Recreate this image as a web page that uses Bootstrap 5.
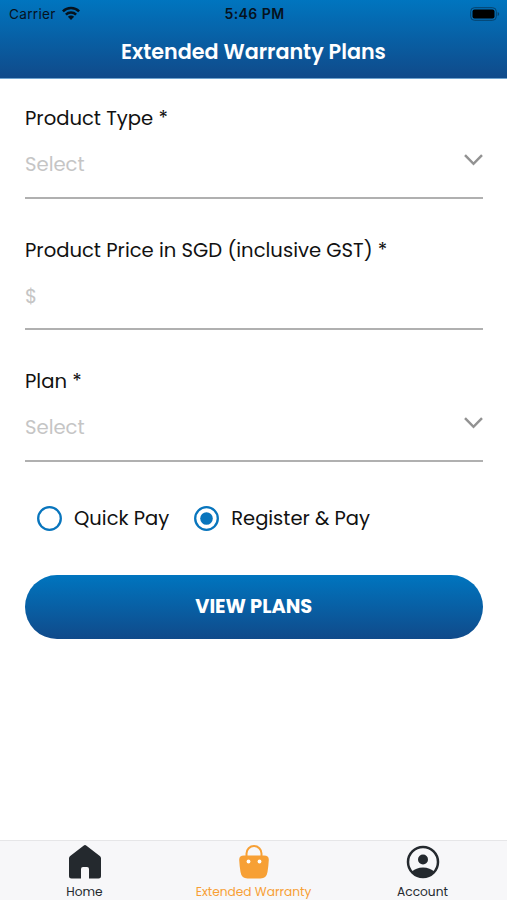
<!DOCTYPE html>
<html lang="en">
<head>
<meta charset="utf-8">
<meta name="viewport" content="width=device-width, initial-scale=1">
<title>Extended Warranty Plans</title>
<link href="https://cdn.jsdelivr.net/npm/bootstrap@5.3.0/dist/css/bootstrap.min.css" rel="stylesheet">
<style>
body{font-family:Poppins,Inter,"Liberation Sans",sans-serif;color:#111;background:#fff;height:900px;overflow:hidden}
svg{display:block}
.app-header{height:79px;background:linear-gradient(#0075bf,#104a8a);border-bottom:1px solid #6fa3cf}
.status{height:27px;padding:0 7px 0 9px;font:400 13.6px/27px Inter,sans-serif;letter-spacing:.3px;color:#06121d}
.status>div{flex:1 1 0}
.status .wifi{margin-left:6px}
.status .carrier{padding-top:1px}
.clock{font-size:14px;font-weight:600;letter-spacing:.45px}
.app-title{font-size:20.7px;line-height:30px;font-weight:600;margin:10px 0 0}
.fields{padding:24px 24.5px 0 25px}
.field{height:95.5px;border-bottom:2px solid #b0b0b0;margin-bottom:36px}
.field label{display:block;font-size:19.6px;line-height:30px}
.entry{height:30px;margin-top:17px;font-size:19.6px;color:#c5c5c5}
.entry svg{margin-top:-11px}
.choices{height:30px;margin-top:42px;padding-left:12px;font-size:19.5px;line-height:30px}
.choices svg{margin-right:12px}
.choices .alt{margin-left:25px}
.btn-plans,.btn-plans:hover{height:64px;margin-top:41.5px;border:0;background:linear-gradient(#0075bf,#104a8a);font-size:19.4px;font-weight:700;color:#fff}
.tabs{height:60px;background:#f7f7f9;border-top:1px solid #e6e6e8;font-size:12.2px}
.tabs a{color:#24292e;padding-top:3px;line-height:16px}
.tabs a.active{color:#f7a035}
.tabs svg{margin-bottom:4px}
</style>
<script src="https://cdn.jsdelivr.net/npm/bootstrap@5.3.0/dist/js/bootstrap.bundle.min.js"></script>
</head>
<body class="d-flex flex-column">
<header class="app-header flex-shrink-0">
  <div class="status d-flex align-items-center">
    <div class="d-flex align-items-center"><span class="carrier">Carrier</span>
      <svg class="wifi" width="18" height="15" viewBox="0 0 18 15" fill="none" stroke="currentColor" stroke-width="2.5"><path d="M.9 5.3a11.5 11.5 0 0 1 16.2 0M3.9 8.6a7.2 7.2 0 0 1 10.2 0"/><path d="M9 13.9 5.9 10.8a4.4 4.4 0 0 1 6.2 0z" fill="currentColor" stroke="none"/></svg></div>
    <span class="clock">5:46 PM</span>
    <div class="d-flex justify-content-end"><svg width="30" height="14" viewBox="0 0 30 14"><rect x=".7" y=".7" width="25.6" height="12.6" rx="3.7" fill="none" stroke="#06426c"/><rect x="2.5" y="2.5" width="22" height="9" rx="2" fill="#000"/><path d="M27.7 5v4q1.5-.7 1.5-2t-1.5-2" fill="#06426c"/></svg></div>
  </div>
  <h1 class="app-title text-white text-center">Extended Warranty Plans</h1>
</header>
<main class="flex-grow-1">
  <form class="fields">
    <div class="field"><label>Product Type *</label>
      <div class="entry d-flex align-items-center justify-content-between"><span>Select</span><svg width="19" height="12" viewBox="0 0 19 12" fill="none" stroke="#929292" stroke-width="2.5"><path d="m1 1.2 8.5 8.6L18 1.2"/></svg></div></div>
    <div class="field"><label>Product Price in SGD (inclusive GST) *</label>
      <div class="entry d-flex align-items-center"><span>$</span></div></div>
    <div class="field"><label>Plan *</label>
      <div class="entry d-flex align-items-center justify-content-between"><span>Select</span><svg width="19" height="12" viewBox="0 0 19 12" fill="none" stroke="#929292" stroke-width="2.5"><path d="m1 1.2 8.5 8.6L18 1.2"/></svg></div></div>
    <div class="choices d-flex align-items-center">
      <div class="d-flex align-items-center"><svg width="25" height="25" viewBox="0 0 25 25"><circle cx="12.5" cy="12.5" r="11.3" fill="none" stroke="#0875bd" stroke-width="2.3"/></svg><span>Quick Pay</span></div>
      <div class="alt d-flex align-items-center"><svg width="25" height="25" viewBox="0 0 25 25"><circle cx="12.5" cy="12.5" r="11.3" fill="none" stroke="#0875bd" stroke-width="2.3"/><circle cx="12.5" cy="12.5" r="6.3" fill="#0875bd"/></svg><span>Register &amp; Pay</span></div>
    </div>
    <button type="button" class="btn btn-plans rounded-pill w-100">VIEW PLANS</button>
  </form>
</main>
<nav class="tabs d-flex flex-shrink-0">
  <a class="col-4 d-flex flex-column align-items-center text-decoration-none" href="#"><svg width="34" height="36" viewBox="0 0 34 36"><path d="M15.5 1.7q1.5-1.2 3 0L31.8 12q1.2 1 1.2 2.4V32q0 2.5-2.5 2.5H21V25q0-2-2-2h-4Q13 23 13 25v9.5H3.5Q1 34.500 1 32V14.400Q1 13 2.200 12z" fill="#24292e"/></svg><span>Home</span></a>
  <a class="active col-4 d-flex flex-column align-items-center text-decoration-none" href="#"><svg width="32" height="36" viewBox="0 0 32 36"><path d="M8.500 14V9.500a7.500 7.500 0 0 1 15 0V14" fill="none" stroke="#f7a035" stroke-width="2"/><path d="M6 11.500h20q5 0 4.800 4.500Q30.500 22 29.500 28q-1 6.500-7 6.500h-13q-6 0-7-6.500Q1.500 22 1.200 16 1 11.500 6 11.500z" fill="#f7a035"/><circle cx="10.500" cy="17.500" r="1.900" fill="#fff"/><circle cx="21.500" cy="17.500" r="1.900" fill="#fff"/></svg><span>Extended Warranty</span></a>
  <a class="col-4 d-flex flex-column align-items-center text-decoration-none" href="#"><svg width="34" height="36" viewBox="0 0 34 36"><circle cx="17" cy="18" r="15" fill="none" stroke="#24292e" stroke-width="2.5"/><circle cx="17" cy="15.5" r="5" fill="#24292e"/><path d="M5.5 28q4.500-4.500 11.500-4.500T28.500 28Q24 33 17 33T5.500 28z" fill="#24292e"/></svg><span>Account</span></a>
</nav>
</body>
</html>
